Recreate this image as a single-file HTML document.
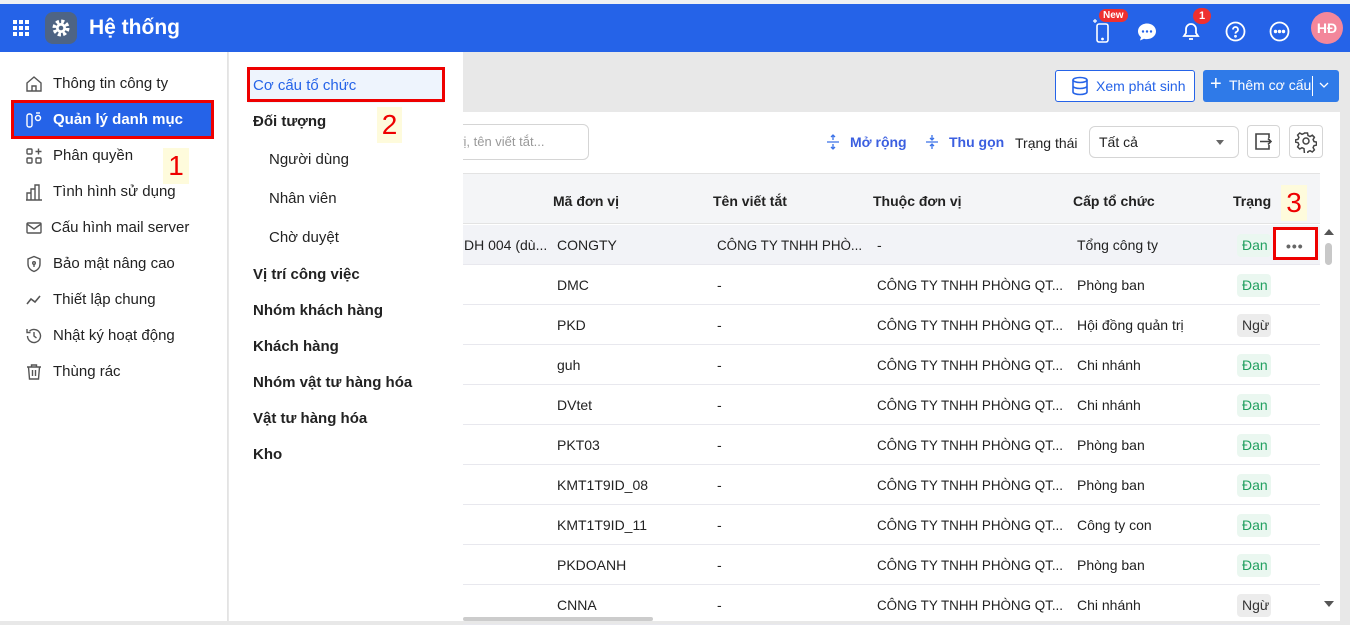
<!DOCTYPE html>
<html><head><meta charset="utf-8"><style>
*{box-sizing:border-box;margin:0;padding:0}
body{width:1350px;height:621px;overflow:hidden;font-family:"Liberation Sans","Noto Sans CJK SC",sans-serif;font-size:14px;color:#222;background:#e8e8e8;position:relative}
.abs{position:absolute}
.top{left:0;top:0;width:1350px;height:4px;background:#eef0f3}
.hdr{left:0;top:4px;width:1350px;height:48px;background:#2563e8}
.side{left:0;top:52px;width:228px;height:569px;background:#fff;border-right:1px solid #e3e3e3}
.sub{left:229px;top:52px;width:234px;height:569px;background:#fff}
.it{position:absolute;left:53px;font-size:15px;color:#222;line-height:18px}
.ic{position:absolute;left:25px;width:18px;height:18px}
.si{position:absolute;font-size:15px;line-height:18px}
.b{font-weight:bold}
.card{left:463px;top:112px;width:877px;height:509px;background:#fff}
.th{left:463px;top:173px;width:857px;height:51px;background:#f4f5f7;border-top:1px solid #e3e3e3;border-bottom:1px solid #e3e3e3}
.th span{position:absolute;top:19px;font-weight:bold;font-size:14px}
.row{position:absolute;left:463px;width:857px;height:40px;border-bottom:1px solid #e8e8ee}
.row span{position:absolute;top:12px;font-size:14px;white-space:nowrap}
.row span.c{font-size:13.4px;top:13px}
.bd{position:absolute;left:774px;top:9px;width:34px;height:23px;border-radius:4px;overflow:hidden;padding:3px 0 0 5px;font-size:14px}
.g{background:#eaf7f0;color:#22a060}
.n{background:#ececec;color:#333}
.red{border:3px solid #e00;position:absolute}
.num{position:absolute;background:#fefbdc;color:#e00;font-size:28px;text-align:center;line-height:36px}
</style></head><body>
<div class="abs top"></div>
<div class="abs hdr">
<svg class="abs" style="left:12px;top:15px" width="18" height="18" viewBox="0 0 18 18" fill="#fff"><rect x="1" y="1" width="4" height="4"/><rect x="7" y="1" width="4" height="4"/><rect x="13" y="1" width="4" height="4"/><rect x="1" y="7" width="4" height="4"/><rect x="7" y="7" width="4" height="4"/><rect x="13" y="7" width="4" height="4"/><rect x="1" y="13" width="4" height="4"/><rect x="7" y="13" width="4" height="4"/><rect x="13" y="13" width="4" height="4"/></svg>
<div class="abs" style="left:45px;top:8px;width:32px;height:32px;border-radius:8px;background:#4e6484"></div>
<svg class="abs" style="left:51px;top:14px" width="20" height="20" viewBox="0 0 20 20"><circle cx="10" cy="10" r="6.5" fill="none" stroke="#fff" stroke-width="4" stroke-dasharray="3 2.1"/><circle cx="10" cy="10" r="5" fill="#fff"/><circle cx="10" cy="10" r="2.3" fill="#4e6484"/></svg>
<div class="abs" style="left:89px;top:12px;color:#fff;font-size:21px;font-weight:bold">Hệ thống</div>
<svg class="abs" style="left:1092px;top:12px" width="20" height="28" viewBox="0 0 20 28" fill="none" stroke="#fff" stroke-width="1.6"><rect x="5" y="8" width="11" height="18" rx="2"/><circle cx="10.5" cy="23" r=".6" fill="#fff"/><path d="M3 3v4M1 5h4" stroke-width="1.2"/></svg>
<div class="abs" style="left:1099px;top:5px;background:#ee3030;color:#fff;font-size:10px;font-weight:bold;padding:1px 4px;border-radius:8px">New</div>
<svg class="abs" style="left:1137px;top:18px" width="20" height="20" viewBox="0 0 20 20"><path d="M10 1.5c5 0 9 3.4 9 7.8s-4 7.8-9 7.8c-1 0-2-.1-3-.4L3 18.5l1-3.3C2.2 13.8 1 11.7 1 9.3 1 4.9 5 1.5 10 1.5z" fill="#fff"/><circle cx="6" cy="9.5" r="1.2" fill="#2563e8"/><circle cx="10" cy="9.5" r="1.2" fill="#2563e8"/><circle cx="14" cy="9.5" r="1.2" fill="#2563e8"/></svg>
<svg class="abs" style="left:1181px;top:16px" width="20" height="22" viewBox="0 0 20 22" fill="none" stroke="#fff" stroke-width="1.8"><path d="M3 16h14l-2-3V9a5 5 0 0 0-10 0v4z"/><path d="M8 19h4"/></svg>
<div class="abs" style="left:1193px;top:4px;width:18px;height:16px;background:#ee3030;border-radius:8px;color:#fff;font-size:11px;font-weight:bold;text-align:center;line-height:16px">1</div>
<svg class="abs" style="left:1225px;top:17px" width="21" height="21" viewBox="0 0 21 21" fill="none" stroke="#fff" stroke-width="1.8"><circle cx="10.5" cy="10.5" r="9"/><path d="M8 8.5a2.5 2.5 0 1 1 3.5 2.3c-.8.4-1 1-1 1.8"/><circle cx="10.5" cy="15.3" r=".5" fill="#fff"/></svg>
<svg class="abs" style="left:1269px;top:17px" width="21" height="21" viewBox="0 0 21 21" fill="none" stroke="#fff" stroke-width="1.8"><circle cx="10.5" cy="10.5" r="9"/><circle cx="6.5" cy="10.5" r=".8" fill="#fff"/><circle cx="10.5" cy="10.5" r=".8" fill="#fff"/><circle cx="14.5" cy="10.5" r=".8" fill="#fff"/></svg>
<div class="abs" style="left:1311px;top:8px;width:32px;height:32px;border-radius:50%;background:#f3879b;color:#fff;font-weight:bold;font-size:14px;text-align:center;line-height:32px">HĐ</div>
</div>

<div class="abs side">
<svg class="ic" style="top:23px" viewBox="0 0 18 18" fill="none" stroke="#555" stroke-width="1.4"><path d="M2 8l7-6 7 6v8H2z"/><path d="M7 16v-5h4v5"/></svg><div class="it" style="top:23px">Thông tin công ty</div>
<div class="abs" style="left:14px;top:49px;width:198px;height:38px;background:#2563e8;border-radius:2px"></div>
<svg class="ic" style="top:59px" viewBox="0 0 18 18" fill="none" stroke="#fff" stroke-width="1.4"><rect x="2" y="3" width="5" height="13" rx="2"/><circle cx="13" cy="7" r="2.5"/><path d="M11 2h4"/></svg><div class="it b" style="top:59px;color:#fff;font-weight:bold">Quản lý danh mục</div>
<svg class="ic" style="top:95px" viewBox="0 0 18 18" fill="none" stroke="#555" stroke-width="1.4"><rect x="2" y="2" width="5" height="5" rx="1"/><rect x="2" y="11" width="5" height="5" rx="1"/><rect x="11" y="11" width="5" height="5" rx="1"/><path d="M13.5 1.5v6M10.5 4.5h6"/></svg><div class="it" style="top:95px">Phân quyền</div>
<svg class="ic" style="top:131px" viewBox="0 0 18 18" fill="none" stroke="#555" stroke-width="1.4"><path d="M2 17V10h4v7M6 17V6h4v11M10 17V2h4v15M1 17h16"/></svg><div class="it" style="top:131px">Tình hình sử dụng</div>
<svg class="ic" style="top:167px" viewBox="0 0 18 18" fill="none" stroke="#555" stroke-width="1.4"><rect x="2" y="4" width="14" height="10" rx="1"/><path d="M2 5l7 5 7-5"/></svg><div class="it" style="top:167px;left:51px">Cấu hình mail server</div>
<svg class="ic" style="top:203px" viewBox="0 0 18 18" fill="none" stroke="#555" stroke-width="1.4"><path d="M9 1.5l6 2.5v5c0 4-3 6.5-6 7.5-3-1-6-3.5-6-7.5V4z"/><circle cx="9" cy="8" r="1.3"/><path d="M9 9v3"/></svg><div class="it" style="top:203px">Bảo mật nâng cao</div>
<svg class="ic" style="top:239px" viewBox="0 0 18 18" fill="none" stroke="#555" stroke-width="1.6"><path d="M2 13l4-5 4 3 5-6"/></svg><div class="it" style="top:239px">Thiết lập chung</div>
<svg class="ic" style="top:275px" viewBox="0 0 18 18" fill="none" stroke="#555" stroke-width="1.4"><path d="M2.5 9a6.5 6.5 0 1 0 2-4.7"/><path d="M2 2v3.5h3.5M9 5v4l2.5 2"/></svg><div class="it" style="top:275px">Nhật ký hoạt động</div>
<svg class="ic" style="top:311px" viewBox="0 0 18 18" fill="none" stroke="#555" stroke-width="1.4"><path d="M2 4h14M6.5 4V2h5v2M3.5 4l1 12h9l1-12M7.5 7v6M10.5 7v6"/></svg><div class="it" style="top:311px">Thùng rác</div>
</div>
<div class="red" style="left:11px;top:100px;width:203px;height:39px"></div>
<div class="num" style="left:163px;top:148px;width:26px">1</div>

<div class="abs" style="left:1055px;top:70px;width:140px;height:32px;background:#fff;border:1px solid #2563e8;border-radius:3px;color:#2563e8;font-size:14px;padding:7px 0 0 40px">Xem phát sinh</div>
<svg class="abs" style="left:1070px;top:76px" width="20" height="20" viewBox="0 0 20 20" fill="none" stroke="#2563e8" stroke-width="1.6"><ellipse cx="10" cy="4" rx="7" ry="2.5"/><path d="M3 4v12c0 1.4 3 2.5 7 2.5s7-1.1 7-2.5V4M3 10c0 1.4 3 2.5 7 2.5s7-1.1 7-2.5"/></svg>
<div class="abs" style="left:1203px;top:70px;width:136px;height:32px;background:#2f7ae8;border-radius:3px;color:#fff;font-size:14px;padding:7px 0 0 26px">Thêm cơ cấu</div>
<div class="abs" style="left:1210px;top:73px;color:#fff;font-size:20px">+</div>
<div class="abs" style="left:1312px;top:76px;width:1px;height:20px;background:#fff"></div>
<svg class="abs" style="left:1319px;top:81px" width="10" height="8" viewBox="0 0 10 8" fill="none" stroke="#fff" stroke-width="1.3"><path d="M1 2l4 4 4-4"/></svg>

<div class="abs card"></div>
<div class="abs" style="left:440px;top:124px;width:149px;height:36px;border:1px solid #d5d5d5;border-radius:6px;background:#fff"></div>
<div class="abs" style="left:457px;top:134px;color:#999;font-size:13px">vị, tên viết tắt...</div>

<div class="abs sub">
<div class="abs" style="left:19px;top:17px;width:196px;height:34px;background:#eef4fd"></div>
<div class="si" style="left:24px;top:25px;color:#2563e8">Cơ cấu tổ chức</div>
<div class="si b" style="left:24px;top:61px">Đối tượng</div>
<div class="si" style="left:40px;top:99px">Người dùng</div>
<div class="si" style="left:40px;top:138px">Nhân viên</div>
<div class="si" style="left:40px;top:177px">Chờ duyệt</div>
<div class="si b" style="left:24px;top:214px">Vị trí công việc</div>
<div class="si b" style="left:24px;top:250px">Nhóm khách hàng</div>
<div class="si b" style="left:24px;top:286px">Khách hàng</div>
<div class="si b" style="left:24px;top:322px">Nhóm vật tư hàng hóa</div>
<div class="si b" style="left:24px;top:358px">Vật tư hàng hóa</div>
<div class="si b" style="left:24px;top:394px">Kho</div>
</div>
<div class="red" style="left:247px;top:67px;width:198px;height:35px"></div>
<div class="num" style="left:377px;top:107px;width:25px">2</div>

<svg class="abs" style="left:826px;top:134px" width="14" height="16" viewBox="0 0 14 16" fill="none" stroke="#3b72e8" stroke-width="1.3"><path d="M1 8h12M7 1v5M7 10v5M5 3l2-2 2 2M5 13l2 2 2-2"/></svg>
<div class="abs" style="left:850px;top:134px;color:#3b5fe0;font-weight:bold;font-size:14px">Mở rộng</div>
<svg class="abs" style="left:925px;top:134px" width="14" height="16" viewBox="0 0 14 16" fill="none" stroke="#3b72e8" stroke-width="1.3"><path d="M1 8h12M7 1v5M7 10v5M5 4l2 2 2-2M5 12l2-2 2 2"/></svg>
<div class="abs" style="left:949px;top:134px;color:#3b5fe0;font-weight:bold;font-size:14px">Thu gọn</div>
<div class="abs" style="left:1015px;top:135px;font-size:14px">Trạng thái</div>
<div class="abs" style="left:1089px;top:126px;width:150px;height:32px;border:1px solid #d5d5d5;border-radius:6px;padding:7px 0 0 9px;font-size:14px">Tất cả</div>
<div class="abs" style="left:1216px;top:140px;border:4px solid transparent;border-top:5px solid #666"></div>
<div class="abs" style="left:1247px;top:125px;width:33px;height:33px;border:1px solid #d5d5d5;border-radius:4px"></div>
<svg class="abs" style="left:1254px;top:132px" width="19" height="19" viewBox="0 0 19 19" fill="none" stroke="#444" stroke-width="1.6"><path d="M15 6V2H2v15h13v-4M6 9.5h11M14 6.5l3 3-3 3"/></svg>
<div class="abs" style="left:1289px;top:125px;width:34px;height:33px;border:1px solid #d5d5d5;border-radius:4px"></div>
<svg class="abs" style="left:1295px;top:131px" width="22" height="22" viewBox="0 0 22 22" fill="none" stroke="#444" stroke-width="1.5"><path d="M9.5 2h3l.5 2.5 2 1 2.3-1.3 2.1 2.1-1.3 2.3.9 2 2.5.5v3l-2.5.5-.9 2 1.3 2.3-2.1 2.1-2.3-1.3-2 .9-.5 2.5h-3L9 17.6l-2-.9-2.3 1.3-2.1-2.1L3.9 13.6 3 11.6.5 11.1V8.9L3 8.4l.9-2-1.3-2.3 2.1-2.1L7 3.3 9 2.5z"/><circle cx="11" cy="10" r="3"/></svg>

<div class="abs th">
<span style="left:90px">Mã đơn vị</span><span style="left:250px">Tên viết tắt</span><span style="left:410px">Thuộc đơn vị</span><span style="left:610px">Cấp tổ chức</span><span style="left:770px">Trạng</span>
</div>
<div class="num" style="left:1281px;top:185px;width:26px">3</div>

<div class="row" style="top:225px;background:#f2f3f7"><span style="left:1px">DH 004 (dù...</span><span style="left:94px">CONGTY</span><span class="c" style="left:254px">CÔNG TY TNHH PHÒ...</span><span style="left:414px">-</span><span style="left:614px">Tổng công ty</span><div class="bd g">Đan</div></div>
<div class="row" style="top:265px"><span style="left:94px">DMC</span><span style="left:254px">-</span><span class="c" style="left:414px">CÔNG TY TNHH PHÒNG QT...</span><span style="left:614px">Phòng ban</span><div class="bd g">Đan</div></div>
<div class="row" style="top:305px"><span style="left:94px">PKD</span><span style="left:254px">-</span><span class="c" style="left:414px">CÔNG TY TNHH PHÒNG QT...</span><span style="left:614px">Hội đồng quản trị</span><div class="bd n">Ngừ</div></div>
<div class="row" style="top:345px"><span style="left:94px">guh</span><span style="left:254px">-</span><span class="c" style="left:414px">CÔNG TY TNHH PHÒNG QT...</span><span style="left:614px">Chi nhánh</span><div class="bd g">Đan</div></div>
<div class="row" style="top:385px"><span style="left:94px">DVtet</span><span style="left:254px">-</span><span class="c" style="left:414px">CÔNG TY TNHH PHÒNG QT...</span><span style="left:614px">Chi nhánh</span><div class="bd g">Đan</div></div>
<div class="row" style="top:425px"><span style="left:94px">PKT03</span><span style="left:254px">-</span><span class="c" style="left:414px">CÔNG TY TNHH PHÒNG QT...</span><span style="left:614px">Phòng ban</span><div class="bd g">Đan</div></div>
<div class="row" style="top:465px"><span style="left:94px">KMT1T9ID_08</span><span style="left:254px">-</span><span class="c" style="left:414px">CÔNG TY TNHH PHÒNG QT...</span><span style="left:614px">Phòng ban</span><div class="bd g">Đan</div></div>
<div class="row" style="top:505px"><span style="left:94px">KMT1T9ID_11</span><span style="left:254px">-</span><span class="c" style="left:414px">CÔNG TY TNHH PHÒNG QT...</span><span style="left:614px">Công ty con</span><div class="bd g">Đan</div></div>
<div class="row" style="top:545px"><span style="left:94px">PKDOANH</span><span style="left:254px">-</span><span class="c" style="left:414px">CÔNG TY TNHH PHÒNG QT...</span><span style="left:614px">Phòng ban</span><div class="bd g">Đan</div></div>
<div class="row" style="top:585px"><span style="left:94px">CNNA</span><span style="left:254px">-</span><span class="c" style="left:414px">CÔNG TY TNHH PHÒNG QT...</span><span style="left:614px">Chi nhánh</span><div class="bd n">Ngừ</div></div>

<div class="red" style="left:1273px;top:227px;width:45px;height:33px;background:#fff"></div>
<div class="abs" style="left:1286px;top:238px;color:#666;font-size:14px;letter-spacing:1px;font-weight:bold">•••</div>
<div class="abs" style="left:1324px;top:229px;border:5px solid transparent;border-bottom:6px solid #555;border-top:0"></div>
<div class="abs" style="left:1325px;top:243px;width:7px;height:22px;background:#c8c8c8;border-radius:4px"></div>
<div class="abs" style="left:1324px;top:601px;border:5px solid transparent;border-top:6px solid #555;border-bottom:0"></div>
<div class="abs" style="left:463px;top:617px;width:190px;height:4px;background:#ccc;border-radius:2px"></div>
</body></html>
